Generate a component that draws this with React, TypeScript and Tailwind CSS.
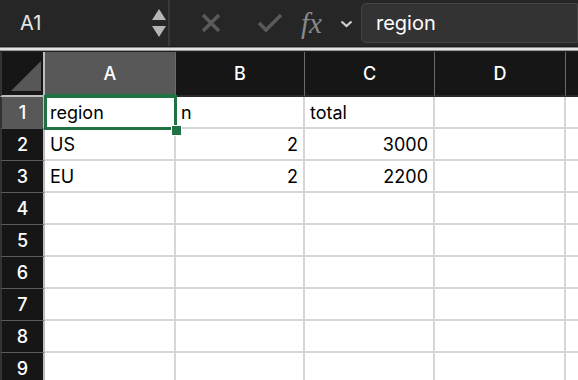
import React from "react";

const cols = ["A", "B", "C", "D", ""];
const widths = [131, 129, 130, 131, 60];
const data: Record<number, (string | { v: string; r?: boolean })[]> = {
  1: ["region", "n", "total", "", ""],
  2: ["US", { v: "2", r: true }, { v: "3000", r: true }, "", ""],
  3: ["EU", { v: "2", r: true }, { v: "2200", r: true }, "", ""],
};

export default function App() {
  const rows = [1, 2, 3, 4, 5, 6, 7, 8, 9];
  return (
    <div
      className="w-[578px] h-[380px] overflow-hidden bg-white relative"
      style={{ fontFamily: "Inter, 'Noto Sans', sans-serif" }}
    >
      {/* top bar */}
      <div className="h-[46px] bg-[#262626] flex items-stretch">
        <div className="w-[170px] border-r-2 border-[#3a3a3a] flex items-center justify-between pl-[20px] pr-[2px]">
          <span className="text-[20px] text-[#e6e6e6]">A1</span>
          <div className="flex flex-col gap-[6px] items-center">
            <svg width="14" height="11" viewBox="0 0 14 11">
              <polygon points="7,0 14,11 0,11" fill="#b5b5b5" />
            </svg>
            <svg width="14" height="11" viewBox="0 0 14 11">
              <polygon points="0,0 14,0 7,11" fill="#b5b5b5" />
            </svg>
          </div>
        </div>
        <div className="flex items-center pl-[30px]">
          <svg width="22" height="22" viewBox="0 0 22 22">
            <path d="M3 3 L19 19 M19 3 L3 19" stroke="#5a5a5a" strokeWidth="3.5" />
          </svg>
          <svg width="26" height="22" viewBox="0 0 26 22" className="ml-[35px]">
            <path d="M2 11 L9 18 L24 3" stroke="#5a5a5a" strokeWidth="3.5" fill="none" />
          </svg>
          <span
            className="ml-[18px] text-[29px] italic text-[#8a8a8a] leading-none"
            style={{ fontFamily: "'Liberation Serif', 'DejaVu Serif', serif" }}
          >
            fx
          </span>
          <svg width="13" height="8" viewBox="0 0 13 8" className="ml-[18px] mt-[2px]">
            <path d="M1.5 1.5 L6.5 6 L11.5 1.5" stroke="#d0d0d0" strokeWidth="2.2" fill="none" />
          </svg>
        </div>
        <div className="flex-1 ml-[8px] mt-[3px] mb-[3px] bg-[#333333] border border-[#444] rounded-l-[5px] flex items-center pl-[14px]">
          <span className="text-[20px] text-white">region</span>
        </div>
      </div>
      {/* separator */}
      <div className="h-[6px] bg-[#1c1c1c] flex flex-col">
        <div className="h-[1px] bg-[#8a8a8a] mt-[1px]" />
        <div className="h-[2px] bg-[#e2e2e2]" />
        <div className="h-[1px] bg-[#9a9a9a]" />
      </div>
      {/* grid */}
      <div className="relative">
        {/* header row */}
        <div className="flex h-[45px] bg-[#161616]">
          <div className="w-[45px] shrink-0 border-r-2 border-b-2 border-[#bdbdbd] border-l-2 border-l-[#333] relative">
            <svg width="32" height="32" viewBox="0 0 32 32" className="absolute left-[8px] top-[8px]">
              <polygon points="1,31 31,31 31,1" fill="#575757" />
            </svg>
          </div>
          {cols.map((c, i) => (
            <div
              key={i}
              className={`shrink-0 h-full flex items-center justify-center text-[18px] font-medium text-white border-r border-[#6a6a6a] ${
                i === 0 ? "bg-[#585858] border-b-[3px] border-b-[#1f7244]" : "border-b-2 border-b-[#2a2a2a]"
              }`}
              style={{ width: widths[i] }}
            >
              {c}
            </div>
          ))}
        </div>
        {rows.map((r) => (
          <div key={r} className="flex h-[32px]">
            <div
              className={`w-[45px] shrink-0 flex items-center justify-center text-[18px] font-medium text-white border-r-2 border-r-[#bdbdbd] border-b border-b-[#5a5a5a] border-l-2 border-l-[#333] ${
                r === 1 ? "bg-[#585858]" : "bg-[#161616]"
              }`}
            >
              {r}
            </div>
            {cols.map((c, i) => {
              const cell = data[r]?.[i];
              const v = typeof cell === "string" ? cell : cell?.v ?? "";
              const right = typeof cell === "object" && cell?.r;
              return (
                <div
                  key={i}
                  className={`shrink-0 flex items-center text-[18px] text-black border-r-2 border-b-2 border-[#d6d6d6] ${
                    right ? "justify-end pr-[5px]" : "pl-[5px]"
                  }`}
                  style={{ width: widths[i] }}
                >
                  {v}
                </div>
              );
            })}
          </div>
        ))}
        {/* selection */}
        <div className="absolute left-[44px] top-[43px] w-[133px] h-[35px] border-[3px] border-[#1f7244] pointer-events-none" />
        <div className="absolute left-[171px] top-[73px] w-[9px] h-[9px] bg-[#1f7244] border border-white box-content" />
      </div>
    </div>
  );
}
